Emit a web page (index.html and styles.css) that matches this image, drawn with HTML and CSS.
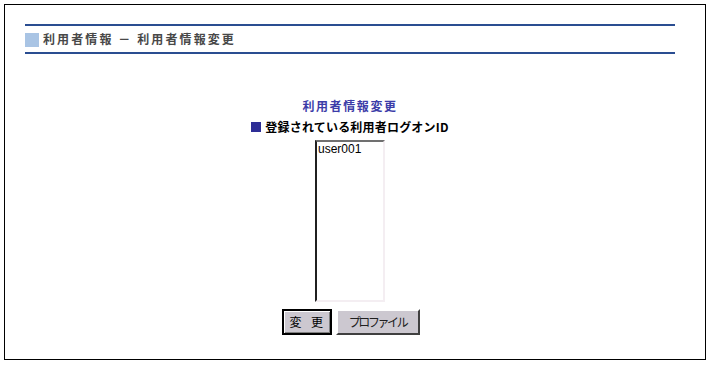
FILE: index.html
```html
<html>

<head>
  <meta charset="utf-8">
  <link rel="stylesheet" href="styles.css">
</head>

<body>
  <div class="frame">
    <div class="content">
      <div class="page-header">
        <div class="header-mark"></div>
        <div class="header-text">利用者情報 － 利用者情報変更</div>
      </div>
      <div class="form">
        <div class="form-title">利用者情報変更</div>
        <div class="form-label"><span class="label-mark"></span>登録されている利用者ログオンID</div>
        <div class="list-box">
          <div class="list-item">user001</div>
        </div>
        <div class="buttons">
          <button class="btn btn-default">変 更</button>
          <button class="btn btn-narrow">プロファイル</button>
        </div>
      </div>
    </div>
  </div>
</body>

</html>
```

FILE: styles.css
```css
html,
body {
  margin: 0;
  padding: 0;
  background: #fff;
  font-family: "Noto Sans CJK JP", "Liberation Sans", sans-serif;
  font-size: 12px;
  color: #000;
}

.frame {
  margin: 4px;
  width: 700px;
  height: 354px;
  border: 1px solid #000;
}

.content {
  width: 650px;
  margin-left: 20px;
  padding-top: 19px;
}

/* header bar */
.page-header {
  display: flex;
  align-items: center;
  gap: 4px;
  height: 26px;
  border-top: 2px solid #2a4d91;
  border-bottom: 2px solid #2a4d91;
}

.header-mark {
  width: 14px;
  height: 14px;
  background: #a9c4e4;
  margin-top: 1px;
}

.header-text {
  color: #484848;
  font-weight: bold;
  letter-spacing: 2.1px;
  line-height: 14px;
}

/* form */
.form {
  display: flex;
  flex-direction: column;
  align-items: center;
  margin-top: 42px;
}

.form-title {
  color: #3c3ca8;
  font-weight: bold;
  letter-spacing: 1.6px;
  line-height: 20px;
}

.form-label {
  display: flex;
  align-items: center;
  gap: 4px;
  font-weight: bold;
  line-height: 22px;
  letter-spacing: 0.2px;
}

.label-mark {
  width: 10px;
  height: 10px;
  background: #2e2e96;
}

.list-box {
  margin-top: 2px;
  width: 66px;
  height: 158px;
  border-top: 2px solid #707070;
  border-left: 2px solid #202020;
  border-right: 2px solid #f4eef2;
  border-bottom: 2px solid #f4eef2;
  background: #fff;
}

.list-item {
  font-family: "Liberation Sans", sans-serif;
  font-size: 12px;
  line-height: 14px;
  padding-left: 1px;
}

.buttons {
  display: flex;
  gap: 4px;
  margin-top: 7px;
  margin-left: 1px;
}

.btn {
  font-family: "Noto Sans CJK JP", sans-serif;
  font-size: 12px;
  height: 26px;
  padding: 0;
  background: #ccc8d0;
  color: #000;
  border: 2px solid;
  border-color: #fff #404040 #404040 #fff;
  line-height: 20px;
}

.btn-default {
  width: 50px;
  letter-spacing: 3.5px;
  text-indent: 3px;
  border: 2px solid #000;
  box-shadow: inset 1px 1px #fff, inset -1px -1px #808080;
}

.btn-narrow {
  width: 84px;
  letter-spacing: -2.4px;
  color: #202020;
}
```
